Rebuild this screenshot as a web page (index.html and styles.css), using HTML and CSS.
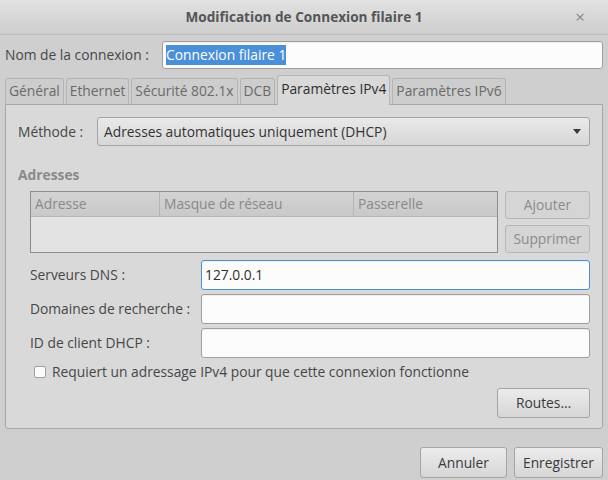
FILE: index.html
```html
<!DOCTYPE html>
<html lang="fr">
<head>
<meta charset="utf-8">
<title>Modification de Connexion filaire 1</title>
<link rel="stylesheet" href="styles.css">
</head>
<body>
<div class="window">
  <div class="titlebar">
    <span class="title">Modification de Connexion filaire 1</span>
    <span class="close">×</span>
  </div>
  <div class="content">
    <div class="name-row">
      <span class="label">Nom de la connexion :</span>
      <div class="entry name-entry"><span class="sel">Connexion filaire 1</span></div>
    </div>
    <div class="notebook">
      <div class="tabs">
        <div class="tab">Général</div>
        <div class="tab">Ethernet</div>
        <div class="tab">Sécurité 802.1x</div>
        <div class="tab">DCB</div>
        <div class="tab active">Paramètres IPv4</div>
        <div class="tab">Paramètres IPv6</div>
      </div>
      <div class="page">
        <div class="method-row">
          <span class="label">Méthode :</span>
          <div class="combo"><span>Adresses automatiques uniquement (DHCP)</span><span class="arrow"></span></div>
        </div>
        <div class="section-title">Adresses</div>
        <div class="addr-row">
          <div class="table">
            <div class="thead">
              <div class="th c1">Adresse</div>
              <div class="th c2">Masque de réseau</div>
              <div class="th c3">Passerelle</div>
            </div>
            <div class="tbody"></div>
          </div>
          <div class="side-buttons">
            <div class="button disabled">Ajouter</div>
            <div class="button disabled">Supprimer</div>
          </div>
        </div>
        <div class="form">
          <span class="label">Serveurs DNS :</span>
          <div class="entry focused">127.0.0.1</div>
          <span class="label">Domaines de recherche :</span>
          <div class="entry"></div>
          <span class="label">ID de client DHCP :</span>
          <div class="entry"></div>
        </div>
        <div class="check-row">
          <span class="checkbox"></span>
          <span class="label">Requiert un adressage IPv4 pour que cette connexion fonctionne</span>
        </div>
        <div class="routes-row">
          <div class="button routes">Routes…</div>
        </div>
      </div>
    </div>
    <div class="footer">
      <div class="button foot">Annuler</div>
      <div class="button foot">Enregistrer</div>
    </div>
  </div>
</div>
</body>
</html>
```

FILE: styles.css
```css
* { box-sizing: border-box; }
html, body { margin: 0; padding: 0; }
body {
  width: 608px;
  height: 480px;
  overflow: hidden;
  background: #cfcfcf;
  font-family: "Open Sans", "DejaVu Sans", sans-serif;
  font-size: 13.8px;
  line-height: 18px;
  color: #474747;
}
.window { width: 608px; height: 480px; display: flex; flex-direction: column; }
.titlebar {
  height: 35px;
  flex: none;
  position: relative;
  display: flex;
  align-items: center;
  justify-content: center;
  background: linear-gradient(#e2e2e2, #cdcdcd);
  border-bottom: 1px solid #bdbdbd;
}
.title { font-weight: 700; color: #555; font-size: 13.6px; }
.close {
  position: absolute;
  right: 23px;
  top: 7px;
  font-size: 17px;
  color: #8a8a8a;
  line-height: 20px;
}
.content { padding: 5px 5px 0 5px; display: flex; flex-direction: column; flex: 1; }
.name-row { display: flex; align-items: center; margin-top: 1px; height: 28px; }
.name-row .label { width: 157px; flex: none; }
.entry {
  background: #fcfcfc;
  border: 1px solid #9f9f9f;
  border-radius: 3px;
  height: 28px;
  display: flex;
  align-items: center;
  padding: 0 3px;
  color: #2e2e2e;
  box-shadow: inset 0 1px 1px rgba(0,0,0,0.06);
}
.name-entry { flex: 1; }
.sel { background: #4a90d9; color: #fff; padding: 1px 0; line-height: 18px; }
.entry.focused { border-color: #4a8fd8; }

.notebook { margin-top: 6px; }
.tabs { display: flex; align-items: flex-end; height: 29px; gap: 2px; position: relative; z-index: 1; }
.tab {
  height: 26px;
  padding: 0 3px 2px 3px;
  display: flex;
  align-items: center;
  background: #cdcdcd;
  border: 1px solid #b4b4b4;
  border-bottom: none;
  border-radius: 3px 3px 0 0;
  color: #6a6a6a;
}
.tab.active {
  height: 30px;
  background: #d9d9d9;
  color: #2f2f2f;
  margin-bottom: -1px;
  padding: 0 3px 3px 3px;
}
.page {
  background: #d9d9d9;
  border: 1px solid #a9a9a9;
  border-radius: 0 0 3px 3px;
  height: 325px;
  padding: 12px 12px 0 12px;
  display: flex;
  flex-direction: column;
}
.method-row { display: flex; align-items: center; height: 29px; }
.method-row .label { width: 79px; flex: none; }
.combo {
  flex: 1;
  height: 29px;
  border: 1px solid #a4a4a4;
  border-radius: 3px;
  background: linear-gradient(#e9e9e9, #d7d7d7);
  display: flex;
  align-items: center;
  justify-content: space-between;
  padding: 0 8px 0 6px;
  color: #333;
}
.arrow {
  width: 0; height: 0;
  border-left: 4px solid transparent;
  border-right: 4px solid transparent;
  border-top: 5px solid #3a3a3a;
}
.section-title { margin-top: 20px; font-weight: 700; color: #8a8a8a; height: 18px; line-height: 18px; }
.addr-row { display: flex; margin-top: 7px; margin-left: 12px; gap: 7px; }
.table { width: 468px; height: 62px; border: 1px solid #8d8d8d; background: #e3e3e3; display: flex; flex-direction: column; }
.thead { display: flex; height: 25px; background: linear-gradient(#d3d3d3, #c9c9c9); border-bottom: 1px solid #b5b5b5; }
.th { padding-left: 4px; display: flex; align-items: center; color: #8a8a8a; border-right: 1px solid #b5b5b5; }
.th.c1 { width: 129px; }
.th.c2 { width: 194px; }
.th.c3 { flex: 1; border-right: none; }
.side-buttons { display: flex; flex-direction: column; gap: 6px; }
.button {
  height: 28px;
  border: 1px solid #a5a5a5;
  border-radius: 3px;
  background: linear-gradient(#ececec, #d6d6d6);
  display: flex;
  align-items: center;
  justify-content: center;
  color: #3a3a3a;
}
.button.disabled { width: 85px; background: #d5d5d5; border-color: #b6b6b6; color: #8c8c8c; }
.form {
  display: grid;
  grid-template-columns: 171px 1fr;
  row-gap: 4px;
  margin-top: 7px;
  margin-left: 12px;
  align-items: center;
}
.form .entry { height: 30px; }
.check-row { display: flex; align-items: center; margin-top: 6px; margin-left: 16px; height: 16px; }
.checkbox {
  width: 12px; height: 12px;
  border: 1px solid #a0a0a0;
  border-radius: 2px;
  background: #fbfbfb;
  margin-right: 6px;
}
.routes-row { display: flex; justify-content: flex-end; margin-top: 8px; }
.routes { width: 93px; height: 30px; }
.footer { display: flex; justify-content: flex-end; gap: 7px; margin-top: 18px; }
.foot { width: 87px; height: 31px; }
.foot:last-child { width: 89px; }
```
